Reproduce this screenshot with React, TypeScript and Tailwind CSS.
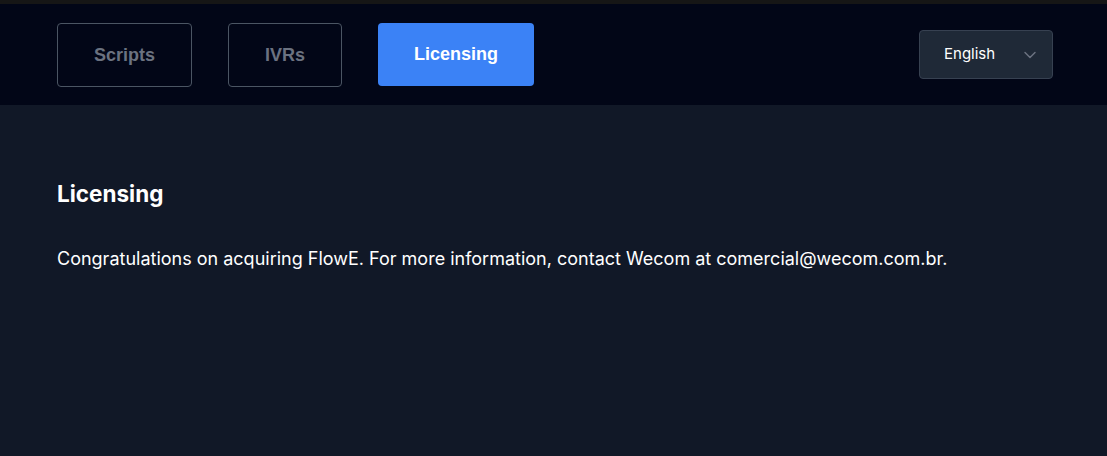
import { ChevronDown } from "lucide-react";

const tabs = [
  { label: "Scripts", active: false },
  { label: "IVRs", active: false },
  { label: "Licensing", active: true },
];

export default function App() {
  return (
    <div className="min-h-[456px] bg-[#111827] font-['Inter',sans-serif]">
      <div className="h-1 bg-[#161616]" />
      <header className="flex h-[101px] items-center justify-between bg-[#020617] pl-[57px] pr-[54px]">
        <nav className="flex gap-9">
          {tabs.map((tab) => (
            <button
              key={tab.label}
              type="button"
              className={
                tab.active
                  ? "h-[63px] rounded-[4px] bg-[#3b82f6] px-9 font-['Liberation_Sans',Arial,sans-serif] text-lg font-bold text-white"
                  : "h-16 rounded-[4px] border border-[#4b5563] px-9 font-['Liberation_Sans',Arial,sans-serif] text-lg font-bold text-[#6b7280]"
              }
            >
              {tab.label}
            </button>
          ))}
        </nav>
        <button
          type="button"
          className="flex h-[49px] w-[134px] items-center justify-between rounded-[4px] border border-[#374151] bg-[#1f2937] pl-6 pr-3 text-[15px] text-white"
        >
          English
          <ChevronDown className="size-5 text-[#6b7280]" strokeWidth={1.75} />
        </button>
      </header>
      <main className="px-[57px] pt-[72px]">
        <h1 className="text-[22.5px] font-bold text-white">Licensing</h1>
        <p className="mt-[34px] text-lg text-white">
          Congratulations on acquiring FlowE. For more information, contact Wecom at comercial@wecom.com.br.
        </p>
      </main>
    </div>
  );
}
